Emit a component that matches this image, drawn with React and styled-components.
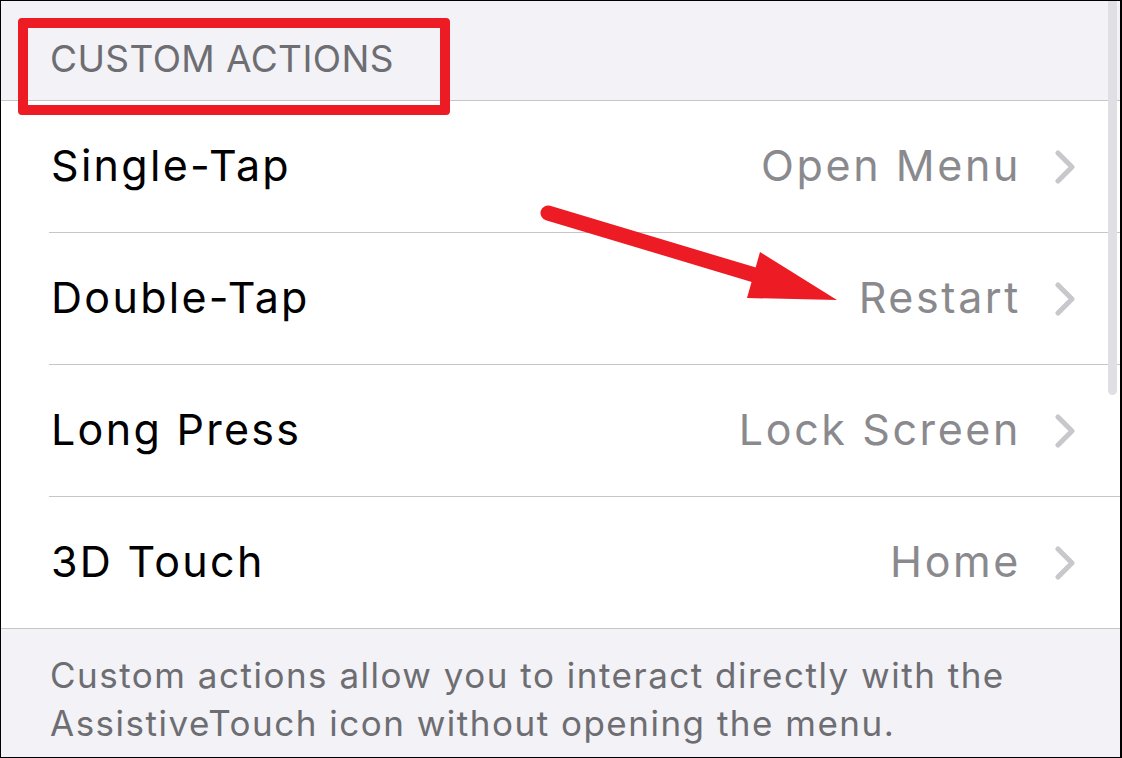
import React from "react";
import styled, { createGlobalStyle } from "styled-components";

const GlobalStyle = createGlobalStyle`
  html, body {
    margin: 0;
    padding: 0;
    background: #000;
  }
  body {
    font-family: Inter, "Noto Sans", "Liberation Sans", sans-serif;
    -webkit-font-smoothing: antialiased;
  }
`;

const actions = [
  { label: "Single-Tap", value: "Open Menu" },
  { label: "Double-Tap", value: "Restart" },
  { label: "Long Press", value: "Lock Screen" },
  { label: "3D Touch", value: "Home" },
];

const Chevron = () => (
  <svg width="20" height="34" viewBox="0 0 20 34">
    <polyline
      points="3,3 17,17 3,31"
      fill="none"
      stroke="#c7c7cc"
      strokeWidth="5"
      strokeLinecap="round"
      strokeLinejoin="round"
    />
  </svg>
);

const Arrow = () => (
  <ArrowSvg width="1122" height="758" viewBox="0 0 1122 758">
    <line
      x1="548"
      y1="213"
      x2="758"
      y2="276"
      stroke="#ed1c24"
      strokeWidth="15"
      strokeLinecap="round"
    />
    <polygon points="760,252 837,300 747,298" fill="#ed1c24" />
  </ArrowSvg>
);

const App = () => {
  return (
    <>
      <GlobalStyle />
      <Frame>
        <Screen>
          <SectionHeader>CUSTOM ACTIONS</SectionHeader>
          <Group>
            {actions.map((a, i) => (
              <Row key={a.label}>
                <RowInner last={i === actions.length - 1}>
                  <Label>{a.label}</Label>
                  <Value>{a.value}</Value>
                  <Chevron />
                </RowInner>
              </Row>
            ))}
          </Group>
          <Footer>
            Custom actions allow you to interact directly with the
            <br />
            AssistiveTouch icon without opening the menu.
          </Footer>
          <Scrollbar />
          <Highlight />
        </Screen>
        <Arrow />
      </Frame>
    </>
  );
};

const Frame = styled.div`
  position: relative;
  width: 1122px;
  height: 758px;
  padding: 1px 2px 1px 1px;
  box-sizing: border-box;
  background: #000;
  overflow: hidden;
`;

const Screen = styled.div`
  position: relative;
  height: 100%;
  background: #f2f2f7;
  display: flex;
  flex-direction: column;
  overflow: hidden;
`;

const SectionHeader = styled.div`
  height: 99px;
  box-sizing: border-box;
  padding: 36px 0 0 49px;
  font-size: 37px;
  line-height: 44px;
  color: #6d6d72;
  letter-spacing: 0.4px;
`;

const Group = styled.div`
  background: #fff;
  border-top: 1px solid #c6c6c8;
  border-bottom: 1px solid #c6c6c8;
`;

const Row = styled.div`
  padding-left: 48px;
`;

const RowInner = styled.div`
  height: 131px;
  display: flex;
  align-items: center;
  padding-right: 45px;
  border-bottom: ${(p) => (p.last ? "none" : "1px solid #c6c6c8")};
`;

const Label = styled.span`
  flex: 1;
  font-size: 43px;
  letter-spacing: 2.3px;
  color: #000;
  padding-left: 2px;
  margin-top: -4px;
`;

const Value = styled.span`
  font-size: 43px;
  letter-spacing: 2.6px;
  color: #8a8a8e;
  margin-right: 34px;
  margin-top: -4px;
`;

const Footer = styled.div`
  padding: 22px 0 0 49px;
  font-size: 35px;
  line-height: 48px;
  letter-spacing: 1.5px;
  white-space: nowrap;
  color: #6d6d72;
`;

const Scrollbar = styled.div`
  position: absolute;
  top: -10px;
  right: 3px;
  width: 9px;
  height: 404px;
  border-radius: 5px;
  background: #e0e0e4;
`;

const Highlight = styled.div`
  position: absolute;
  left: 17px;
  top: 17px;
  width: 432px;
  height: 97px;
  box-sizing: border-box;
  border: 10px solid #ed1c24;
  border-radius: 4px;
`;

const ArrowSvg = styled.svg`
  position: absolute;
  left: 0;
  top: 0;
  pointer-events: none;
`;

export default App;
